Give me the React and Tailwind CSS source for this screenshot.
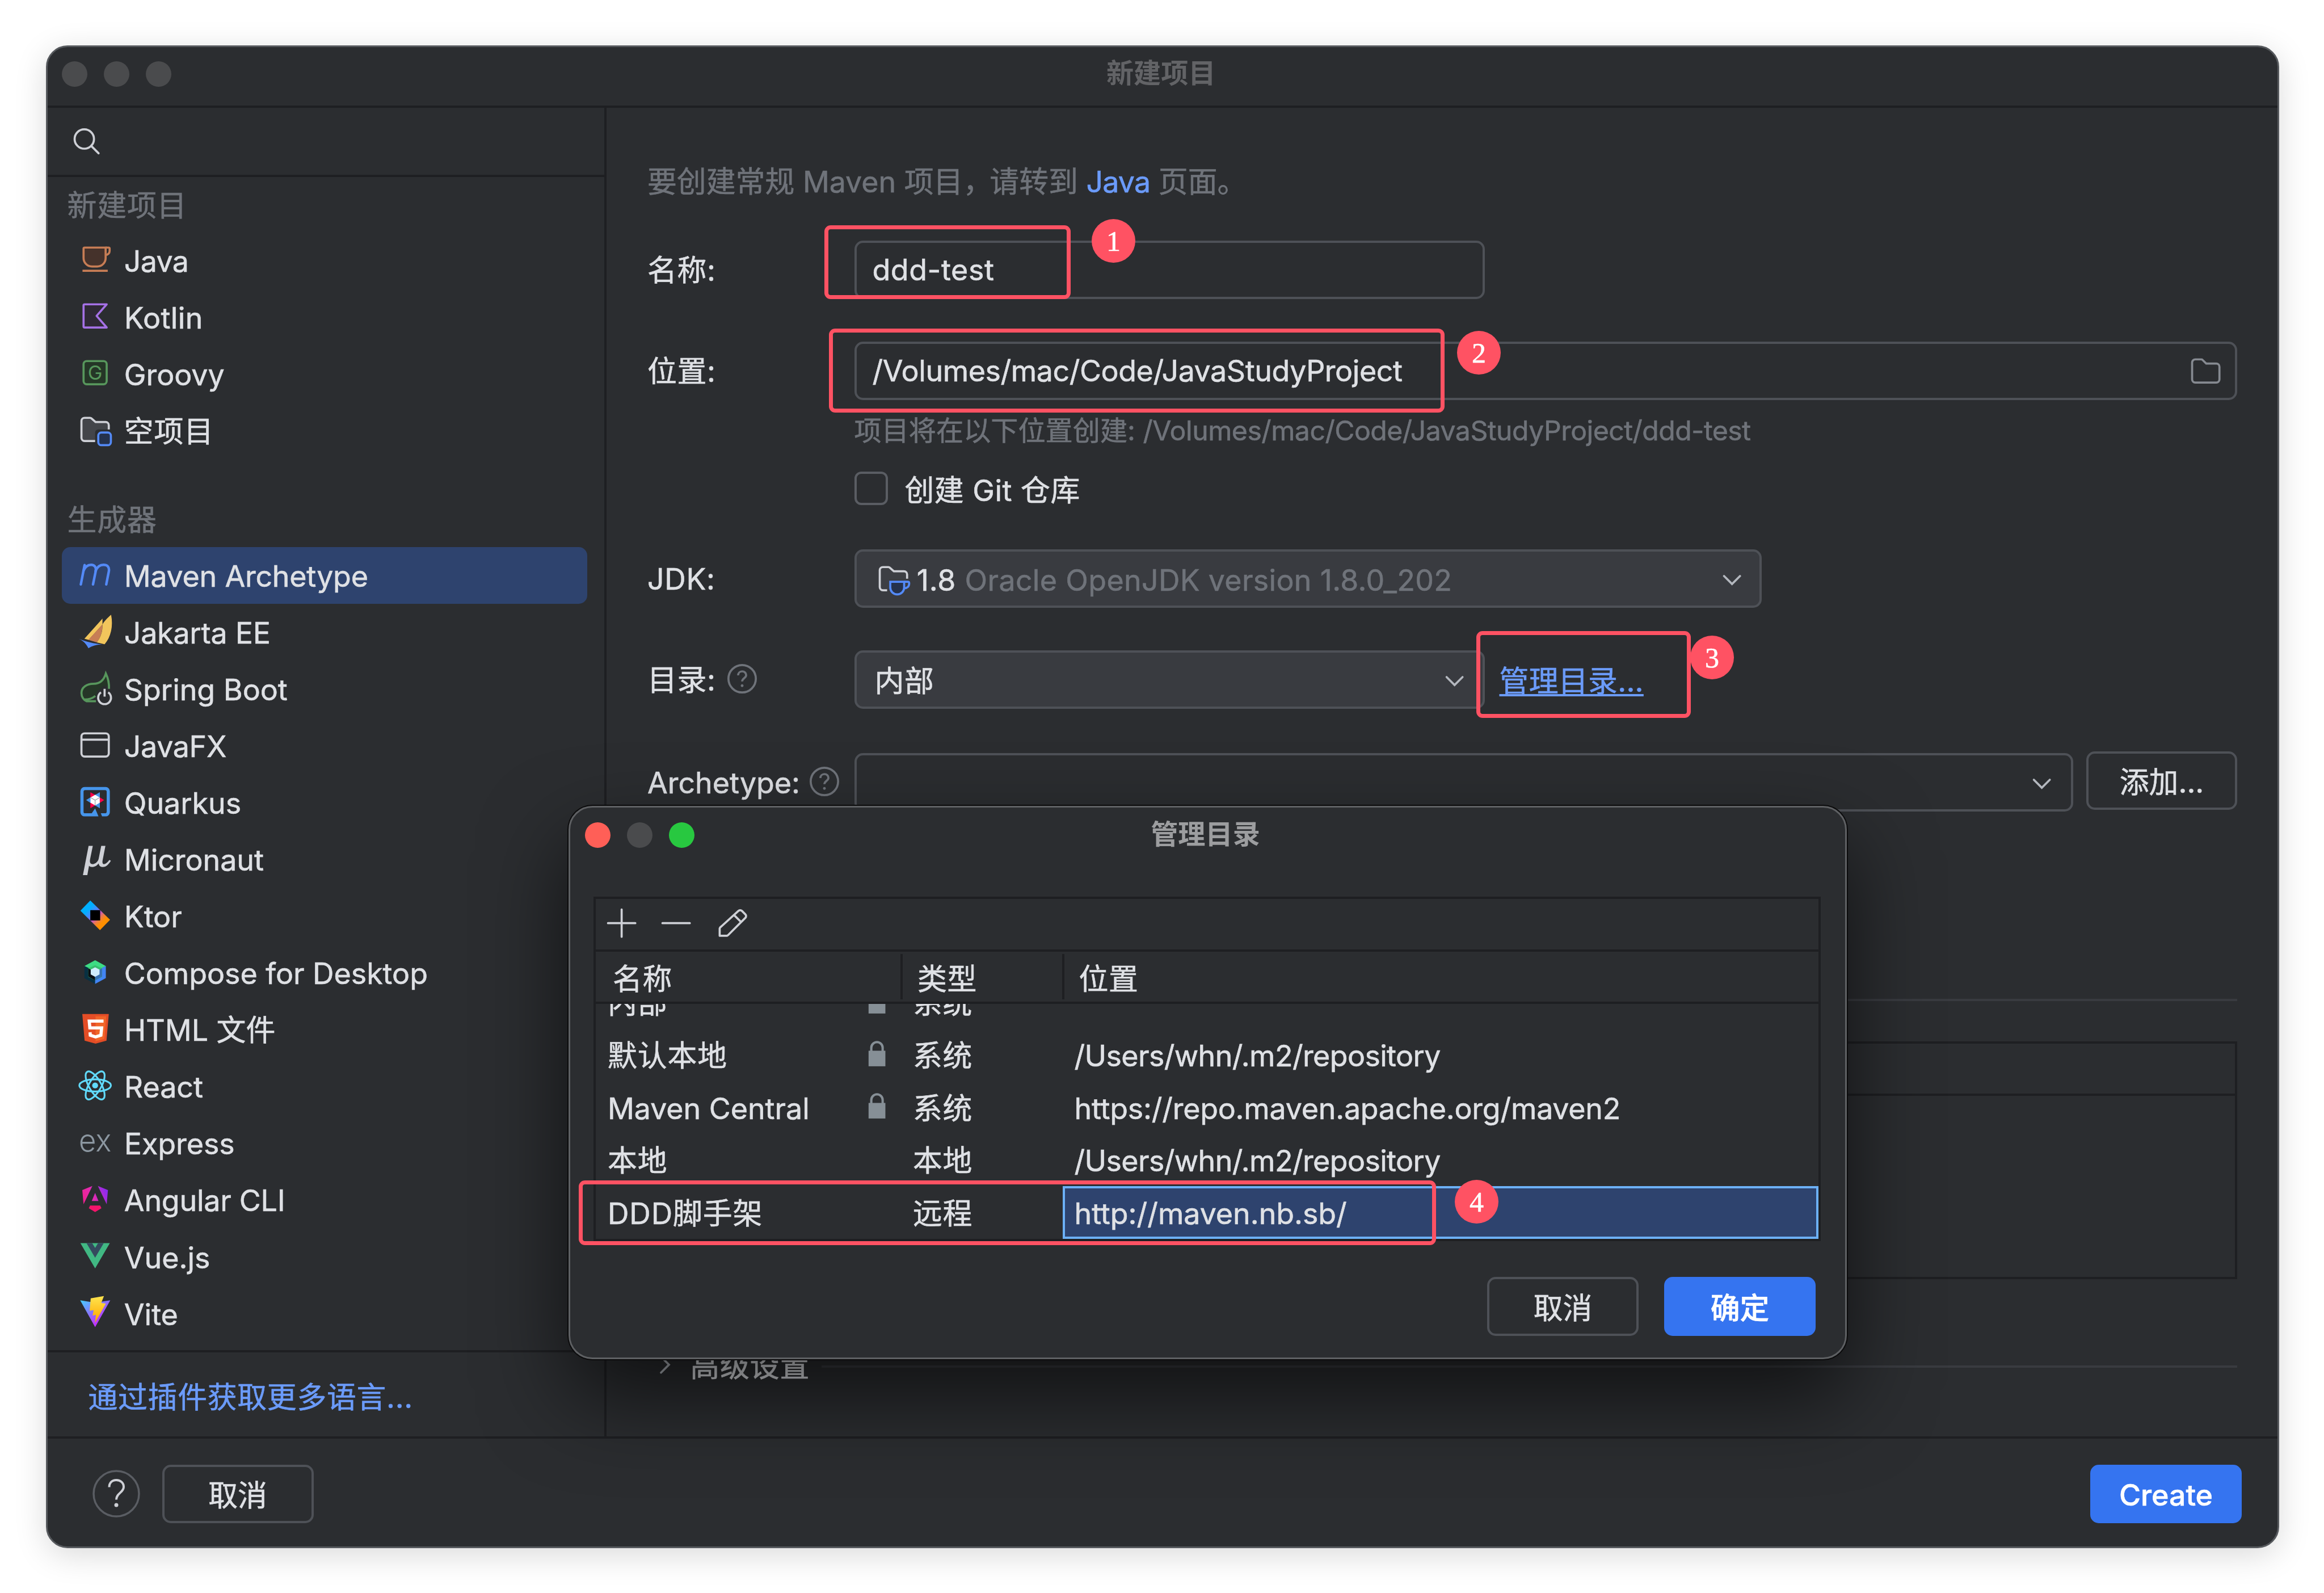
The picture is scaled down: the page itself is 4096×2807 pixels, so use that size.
import React from "react";

/* ---------- sidebar icons (16-unit grid) ---------- */

function Icon({ children, className = "" }) {
  return (
    <svg viewBox="0 0 16 16" fill="none" className={`h-[59.3px] w-[59.3px] shrink-0 overflow-visible ${className}`}>
      {children}
    </svg>
  );
}

const JavaIcon = () => (
  <Icon>
    <path d="M2.500 3a.5.5 0 0 1 .5-.5h10v5a4 4 0 0 1-4 4H6.500a4 4 0 0 1-4-4z" fill="#45322B" stroke="#C77D55" />
    <path d="M13 2.500h1.400a.5.5 0 0 1 .5.5v1.100A1.900 1.900 0 0 1 13 6M2 13.500h12" stroke="#C77D55" />
  </Icon>
);

const KotlinIcon = () => (
  <Icon>
    <path d="M13.500 2.500H3a.5.5 0 0 0-.5.5v10a.5.5 0 0 0 .5.5h10.500L8.700 8z" fill="#2F2936" stroke="#A571E6" strokeLinejoin="round" />
  </Icon>
);

const GroovyIcon = () => (
  <Icon>
    <rect x="2.500" y="2.500" width="11" height="11" rx="1.500" fill="#253627" stroke="#57965C" />
    <text x="8" y="11.400" textAnchor="middle" fontFamily="Inter" fontSize="9.300" fill="#57965C" strokeWidth="0" className="[-webkit-text-stroke:0]">G</text>
  </Icon>
);

const EmptyProjectIcon = () => (
  <Icon>
    <path d="M14.500 8V6A1.500 1.500 0 0 0 13 4.500H8.200L6.300 2.800a1 1 0 0 0-.7-.3H3A1.500 1.500 0 0 0 1.500 4v8A1.500 1.500 0 0 0 3 13.500h5V9.500A1.500 1.500 0 0 1 9.500 8z" fill="#43454A" />
    <path d="M14.500 8V6A1.500 1.500 0 0 0 13 4.500H8.200L6.300 2.800a1 1 0 0 0-.7-.3H3A1.500 1.500 0 0 0 1.500 4v8A1.500 1.500 0 0 0 3 13.500h5" stroke="#CED0D6" />
    <rect x="9.500" y="9.500" width="6" height="6" rx="1.500" fill="#25324D" stroke="#548AF7" />
  </Icon>
);

const MavenIcon = () => (
  <Icon>
    <g stroke="#548AF7" strokeWidth="1.200" strokeLinecap="round" strokeLinejoin="round">
      <path d="M1.200 12.900 3 3.700" />
      <path d="M2.500 6.300C3.300 4.500 4.700 3.600 6.100 3.600c1.700 0 2.500 1.200 2.200 2.900l-1.300 6.400" />
      <path d="M8.200 6.500c.8-1.900 2.200-2.900 3.800-2.900 2 0 2.900 1.300 2.500 3.200l-1.200 6.100" />
    </g>
  </Icon>
);

const JakartaIcon = () => (
  <Icon>
    <path d="M11.500 1.900 2.900 11.500l2 .5 6.600-7.300z" fill="#F2C55C" />
    <path d="M11.500 4.700 4.800 12l4 1.200C10.700 10.800 11.500 8 11.500 4.700z" fill="#C77D55" />
    <path d="M15.600.1C13.900 1.600 12.300 3.200 11.500 4.700c.1 3.300-.8 6-2.700 8.500l3.700.9C15.500 10.800 16.700 5.500 15.600.1z" fill="#F2C55C" />
    <path d="M.2 11.500c3.600 1.500 7.300 2.300 11.300 2.700-2.700 0-4.700.5-6.700 1.800C3.800 14 2.500 12.600.2 11.500z" fill="#548AF7" />
  </Icon>
);

const SpringIcon = () => (
  <Icon>
    <path d="M13.100 1.200c-1 3.400-3 4.700-5.900 4.700-3.200 0-5.700 1.700-5.700 4.400 0 1.600.7 2.600 1.700 3l5.200-1.700.7-2.400 3.200-2.300h2.200z" fill="#253627" />
    <path d="M14.600 8.300c.1-2.500-.3-4.800-1.500-7.300-1 3.500-3 4.900-5.900 4.900-3.200 0-5.700 1.700-5.700 4.400 0 2 1.200 3.400 2.400 3.900h4.500M3 13.400c2 0 3.700-.6 5.100-1.700" stroke="#57965C" />
    <path d="M10.800 10a3.050 3.050 0 1 0 3.400 0M12.500 8.300v3.700" stroke="#CED0D6" />
  </Icon>
);

const JavaFxIcon = () => (
  <Icon>
    <rect x="1.500" y="2.500" width="13" height="11" rx="1.500" stroke="#CED0D6" />
    <path d="M1.500 5.500h13" stroke="#CED0D6" />
  </Icon>
);

const QuarkusIcon = () => (
  <Icon>
    <path d="M6.400 13.500H3.200a.7.7 0 0 1-.7-.7V3.200c0-.4.3-.7.7-.7h9.600c.4 0 .7.300.7.7v9.600c0 .4-.3.7-.7.7h-2.100l.6 1.500H13a2 2 0 0 0 2-2V3a2 2 0 0 0-2-2H3a2 2 0 0 0-2 2v10a2 2 0 0 0 2 2h6.600L8 11.200z" fill="#4695EB" />
    <path d="m5.750 3.500 2.500 1.400-2.500 1.600zM12.300 7.250 10 5.800v2.900zM5.750 11.100l2.500-1.500-2.500-1.600z" fill="#FF004A" />
    <path d="M10.250 3.500 7.700 4.900l2.550 1.600zM3.700 7.250 6 5.800v2.900zM10.250 11.100 7.700 9.600 10.250 8z" fill="#4695EB" />
    <path d="m8 4.700 2.200 1.300v2.500L8 9.800 5.800 8.500V6z" fill="#fff" />
    <path d="M5.900 6.100 8 7.300l2.100-1.200M8 7.300v2.400" stroke="#9a9da3" strokeWidth=".3" />
  </Icon>
);

const MicronautIcon = () => (
  <Icon>
    <path d="M4.900 2h2L5.600 8.400c-.3 1.600.2 2.300 1.200 2.300 1.300 0 2.600-1.200 2.900-2.600L10.900 2h2l-1.300 6.700c-.3 1.400 0 2 .6 2 .8 0 1.700-.9 2.600-2l.7.4c-1.200 2-2.500 3-3.900 3-1.200 0-1.800-.7-1.900-1.700-.9 1.100-2 1.700-3.100 1.700-.7 0-1.200-.2-1.500-.6L4.300 15.900H2.200z" fill="#CED0D6" />
  </Icon>
);

const KtorIcon = () => (
  <Icon>
    <defs>
      <linearGradient id="ktor" x1="2" y1="2" x2="14" y2="14" gradientUnits="userSpaceOnUse">
        <stop offset=".25" stopColor="#00AFFF" />
        <stop offset=".42" stopColor="#5282FF" />
        <stop offset=".56" stopColor="#C757BC" />
        <stop offset=".66" stopColor="#EE7B4A" />
        <stop offset=".78" stopColor="#FF8F00" />
      </linearGradient>
    </defs>
    <path d="M1 5.900 5.700 1 15.100 10.200 10.300 15.100z" fill="url(#ktor)" />
    <path d="M5.700 5.600h4.700v4.900H5.700z" fill="#000" />
  </Icon>
);

const ComposeIcon = () => (
  <Icon>
    <path d="m8 2.400 5.100 2.800L8 8 2.900 5.200z" fill="#3DDC84" />
    <path d="M2.900 5.200 5.700 6.500v3.300L8 11v2.700l-5.100-2.800z" fill="#083042" />
    <path d="M13.100 5.200 10.300 6.500v3.300L8 11v2.700l5.100-2.800z" fill="#4285F4" />
    <path d="M8 4.800 4.700 6.300v4L8 12l3.300-1.700v-4z" fill="#37BF6E" />
    <path d="M4.700 6.300 8 8v4l-3.300-1.800z" fill="#0a0f14" />
    <path d="M11.300 6.300 8 8v4l3.300-1.800z" fill="#3870B2" />
    <path d="m8 5.800 2.100 1.100v2.300L8 10.300 5.900 9.200V6.900z" fill="#D0EDFC" />
  </Icon>
);

const HtmlIcon = () => (
  <Icon>
    <path d="M1.900 1h12.600l-1.100 12.700L8.200 15.100 3 13.700z" fill="#E44D26" />
    <path d="M8.200 2.100v11.900l4.200-1.200.9-10.700z" fill="#F16529" />
    <path d="M12 4.400H5.200l.3 3.200h5.600l-.35 3.500-2.550.8-2.500-.8-.1-1.400" stroke="#fff" strokeWidth="1.500" />
  </Icon>
);

const ReactIcon = () => (
  <Icon>
    <g stroke="#61DAFB" strokeWidth=".85">
      <ellipse cx="8" cy="8" rx="7.500" ry="2.900" />
      <ellipse cx="8" cy="8" rx="7.500" ry="2.900" transform="rotate(60 8 8)" />
      <ellipse cx="8" cy="8" rx="7.500" ry="2.900" transform="rotate(120 8 8)" />
    </g>
    <circle cx="8" cy="8" r="1.400" fill="#61DAFB" />
  </Icon>
);

const ExpressIcon = () => (
  <Icon>
    <text x=".2" y="12.500" fontFamily="Inter" fontWeight="300" fontSize="15" textLength="15.600" lengthAdjust="spacingAndGlyphs" fill="#8C97A1" className="[-webkit-text-stroke:0]">ex</text>
  </Icon>
);

const AngularIcon = () => (
  <Icon>
    <defs>
      <linearGradient id="ng" x1="2" y1="10" x2="14" y2="5" gradientUnits="userSpaceOnUse">
        <stop stopColor="#F0208C" />
        <stop offset=".45" stopColor="#E22BB0" />
        <stop offset="1" stopColor="#8A2BF0" />
      </linearGradient>
    </defs>
    <path d="m1.900 3.800 4.800-2-4.200 8.700zM14.100 3.800l-4.800-2 4.200 8.700zM8 5.100 6.400 9h3.200z" fill="url(#ng)" />
    <path d="M5.600 11.100h4.800l.6 1.300L8 14.200l-3-1.800z" fill="#F5156C" />
  </Icon>
);

const VueIcon = () => (
  <Icon>
    <path d="M1 2h14L8 14z" fill="#41B883" />
    <path d="M3.900 2h2.700L8 4.300 9.400 2h2.700L8 9z" fill="#35495E" />
  </Icon>
);

const ViteIcon = () => (
  <Icon>
    <defs>
      <linearGradient id="viteA" x1="1" y1="2" x2="9" y2="13" gradientUnits="userSpaceOnUse">
        <stop stopColor="#41D1FF" />
        <stop offset="1" stopColor="#BD34FE" />
      </linearGradient>
      <linearGradient id="viteB" x1="9" y1="1" x2="9" y2="12" gradientUnits="userSpaceOnUse">
        <stop stopColor="#FFE14A" />
        <stop offset="1" stopColor="#FFA800" />
      </linearGradient>
    </defs>
    <path d="M.9 2.200 8 3.400l7.200-1.200L8 15z" fill="url(#viteA)" />
    <path d="M5.900 1.300 12.200.2 10.900 3.500l2.200.3L7.900 13l.5-3.900-1.600.4.500-2.600-1.900.3z" fill="url(#viteB)" />
  </Icon>
);

const Chevron = () => (
  <svg viewBox="0 0 16 16" fill="none" className="mt-[4px] h-[59.3px] w-[59.3px] shrink-0">
    <path d="M4.200 6.200 8 10l3.800-3.800" stroke="#B4B8BF" strokeLinecap="round" />
  </svg>
);

const HelpMark = () => (
  <svg viewBox="0 0 14 14" fill="none" className="mb-[3px] h-[52px] w-[52px] shrink-0">
    <circle cx="7" cy="7" r="6.500" stroke="#6F737A" />
    <path d="M5.100 5.400c0-1.100.8-1.900 1.900-1.900s1.900.8 1.900 1.800c0 1.400-1.900 1.500-1.900 3" stroke="#6F737A" />
    <circle cx="7" cy="10.300" r=".65" fill="#6F737A" />
  </svg>
);

const Lock = () => (
  <Icon className="mb-[9px]">
    <path d="M5.300 8V5.200a2.700 2.700 0 0 1 5.400 0V8" stroke="#868F96" strokeWidth="1.100" />
    <path d="M4 6.600h8V14H4z" fill="#868F96" />
  </Icon>
);

/* ---------- data ---------- */

const newProject = [
  { label: "Java", icon: JavaIcon, tracking: "tracking-[-0.6px]" },
  { label: "Kotlin", icon: KotlinIcon, tracking: "tracking-[0.4px]" },
  { label: "Groovy", icon: GroovyIcon },
  { label: "空项目", icon: EmptyProjectIcon, tracking: "tracking-[0.9px]" },
];

const generators = [
  { label: "Maven Archetype", icon: MavenIcon, selected: true, tracking: "tracking-[-0.2px]" },
  { label: "Jakarta EE", icon: JakartaIcon, tracking: "tracking-[-0.2px]" },
  { label: "Spring Boot", icon: SpringIcon },
  { label: "JavaFX", icon: JavaFxIcon, tracking: "tracking-[-0.3px]" },
  { label: "Quarkus", icon: QuarkusIcon },
  { label: "Micronaut", icon: MicronautIcon },
  { label: "Ktor", icon: KtorIcon },
  { label: "Compose for Desktop", icon: ComposeIcon },
  { label: "HTML 文件", icon: HtmlIcon },
  { label: "React", icon: ReactIcon },
  { label: "Express", icon: ExpressIcon },
  { label: "Angular CLI", icon: AngularIcon, tracking: "tracking-[-0.2px]" },
  { label: "Vue.js", icon: VueIcon },
  { label: "Vite", icon: ViteIcon },
];

const catalogs = [
  { name: "内部", locked: true, type: "系统", location: "" },
  { name: "默认本地", locked: true, type: "系统", location: "/Users/whn/.m2/repository", tracking: "tracking-[-0.6px]" },
  { name: "Maven Central", locked: true, type: "系统", location: "https://repo.maven.apache.org/maven2", tracking: "tracking-[-0.2px]" },
  { name: "本地", type: "本地", location: "/Users/whn/.m2/repository", tracking: "tracking-[-0.6px]" },
  { name: "DDD脚手架", type: "远程", location: "http://maven.nb.sb/", selected: true },
];

/* ---------- parts ---------- */

function SidebarItem({ label, icon: Glyph, selected, tracking = "" }) {
  return (
    <div className={`ml-[25px] mr-[30px] flex h-[100.04px] items-center rounded-[15px] pl-[29px] ${selected ? "bg-[#2E436E]" : ""}`}>
      <div className="mb-[4px] mr-[22px]">
        <Glyph />
      </div>
      <span className={`mt-[4px] whitespace-pre ${tracking}`}>{label}</span>
    </div>
  );
}

function Sidebar() {
  return (
    <aside className="flex w-[985px] shrink-0 flex-col border-r-4 border-[#1E1F22]">
      <div className="flex h-[122px] shrink-0 items-center border-b-4 border-[#1E1F22] pl-[39px]">
        <svg viewBox="0 0 16 16" fill="none" className="h-[59.3px] w-[59.3px]">
          <circle cx="6.900" cy="7" r="4.600" stroke="#CED0D6" />
          <path d="m10.200 10.300 3.500 3.500" stroke="#CED0D6" strokeLinecap="round" />
        </svg>
      </div>
      <div className="flex h-[96.5px] shrink-0 items-center pl-[35px] pt-[5px] tracking-[0.9px] text-[#6F737A]">新建项目</div>
      {newProject.map((item) => <SidebarItem key={item.label} {...item} />)}
      <div className="mt-[57.5px] flex h-[98px] shrink-0 items-center pl-[35px] pt-[4px] tracking-[0.9px] text-[#6F737A]">生成器</div>
      {generators.map((item) => <SidebarItem key={item.label} {...item} />)}
      <div className="mt-[14px] flex flex-1 items-center border-t-4 border-[#1E1F22] pl-[72px] pt-[12px] tracking-[0.7px] text-[#6B9BFA]">
        通过插件获取更多语言...
      </div>
    </aside>
  );
}

function Label({ children, help, tight }) {
  return (
    <div className={`flex w-[364.500px] shrink-0 items-center ${tight ? "gap-[17px]" : "gap-[20px]"}`}>
      <span className={`pt-[4px] ${tight ? "" : "tracking-[0.7px]"}`}>{children}</span>
      {help && <HelpMark />}
    </div>
  );
}

function Form() {
  return (
    <main className="flex min-w-0 flex-1 flex-col pl-[72.5px] pr-[71px] pt-[101px]">
      <div className="h-[60px] leading-[60px] text-[#6F737A]">
        要创建常规 Maven 项目<span className="tracking-[-5px]">，</span>请转到 <span className="tracking-[-0.8px] text-[#6B9BFA]">Java</span> 页面。
      </div>

      <div className="mt-[73px] flex h-[102.500px] items-center">
        <Label>名称:</Label>
        <div className="flex h-full w-[1111px] items-center rounded-[15px] border-4 border-[#4E5157] pl-[28px] pt-[1px] tracking-[0.6px]">ddd-test</div>
      </div>

      <div className="mt-[75.5px] flex h-[102.500px] items-center">
        <Label>位置:</Label>
        <div className="flex h-full flex-1 items-center justify-between rounded-[15px] border-4 border-[#4E5157] pl-[28px] pr-[22px]">
          <span className="pt-[1px] tracking-[-0.4px]">/Volumes/mac/Code/JavaStudyProject</span>
          <svg viewBox="0 0 16 16" fill="none" className="h-[59.3px] w-[59.3px]">
            <path d="M1.500 4A1.500 1.500 0 0 1 3 2.500h2.900a.8.8 0 0 1 .5.200L8.200 4.500H13A1.500 1.500 0 0 1 14.500 6v6a1.500 1.500 0 0 1-1.500 1.500H3A1.500 1.500 0 0 1 1.500 12z" stroke="#868A91" />
          </svg>
        </div>
      </div>

      <div className="ml-[364.5px] mt-[24.5px] h-[60px] text-[48.17px] leading-[60px] text-[#6F737A]">
        项目将在以下位置创建: <span className="tracking-[-0.5px]">/Volumes/mac/Code/JavaStudyProject/ddd-test</span>
      </div>

      <div className="ml-[364.5px] mt-[41.5px] flex h-[60px] items-center">
        <div className="h-[59px] w-[59px] rounded-[12px] border-4 border-[#5A5D63]" />
        <span className="ml-[30px] mt-[8px] tracking-[0.5px]">创建 Git 仓库</span>
      </div>

      <div className="mt-[77px] flex h-[103.5px] items-center">
        <Label>JDK:</Label>
        <div className="flex h-full w-[1599.5px] items-center rounded-[15px] border-4 border-[#4E5157] bg-[#393B40] pl-[35px] pr-[19px]">
          <Icon>
            <path d="M14.500 8V6A1.500 1.500 0 0 0 13 4.500H8.200L6.300 2.800a1 1 0 0 0-.7-.3H3A1.500 1.500 0 0 0 1.500 4v8A1.500 1.500 0 0 0 3 13.500h2" stroke="#CED0D6" fill="#43454A" fillOpacity=".4" />
            <path d="M6 8.500h8.500V14H6z" fill="#393B40" />
            <path d="M6.500 9.500h6.600v2.700a3.300 3.300 0 0 1-6.600 0z" fill="#25324D" stroke="#548AF7" />
            <path d="M13.100 9.500h1.700c.5 0 .7.300.7.700 0 1.600-1 2.400-2.400 2.400" stroke="#548AF7" />
          </Icon>
          <span className="ml-[12px] mt-[7px] flex-1 whitespace-pre tracking-[0.8px]">1.8 <span className="tracking-[0.35px] text-[#6F737A]">Oracle OpenJDK version 1.8.0_202</span></span>
          <Chevron />
        </div>
      </div>

      <div className="mt-[74.5px] flex h-[103.5px] items-center">
        <Label help>目录:</Label>
        <div className="flex h-full w-[1111px] items-center justify-between rounded-[15px] border-4 border-[#4E5157] bg-[#393B40] pl-[32px] pr-[19px]">
          <span className="pt-[8px] tracking-[0.7px]">内部</span>
          <Chevron />
        </div>
        <span className="ml-[26px] pt-[8px] tracking-[0.3px] text-[#6B9BFA] underline decoration-4 underline-offset-[4px] [text-decoration-skip-ink:none]">管理目录...</span>
      </div>

      <div className="mt-[77.5px] flex h-[103.5px] items-center">
        <Label help tight>Archetype:</Label>
        <div className="flex h-full flex-1 items-center justify-end rounded-[15px] border-4 border-[#4E5157] pr-[22px]">
          <Chevron />
        </div>
        <button className="mb-[6px] ml-[23px] h-full w-[266px] rounded-[15px] border-4 border-[#4E5157] pt-[8px]">添加...</button>
      </div>

      <div className="mt-[302px] flex h-[60px] shrink-0 items-center">
        <div className="h-[4px] flex-1 bg-[#393B40]" />
      </div>
      <div className="mt-[43px] flex h-[419px] shrink-0 flex-col border-4 border-[#1E1F22]">
        <div className="h-[92px] border-b-4 border-[#1E1F22]" />
      </div>

      <div className="mt-[121px] flex h-[60px] shrink-0 items-center pl-[1px]">
        <svg viewBox="0 0 16 16" fill="none" className="h-[59.3px] w-[59.3px]">
          <path d="M6.200 4.200 10 8l-3.800 3.800" stroke="#B4B8BF" strokeLinecap="round" />
        </svg>
        <span className="ml-[15px] pt-[6px] tracking-[0.9px]">高级设置</span>
        <div className="ml-[21px] mt-[5px] h-[4px] flex-1 bg-[#393B40]" />
      </div>
    </main>
  );
}

function CatalogDialog() {
  return (
    <section className="absolute left-[1002px] top-[1420px] flex h-[975px] w-[2253px] flex-col rounded-[42px] border-[3px] border-[#5E6063] bg-[#2B2D30] shadow-[0_0_0_2px_#0b0b0c,0_66px_150px_rgba(0,0,0,0.62)]">
      <header className="grid h-[97px] shrink-0 grid-cols-[1fr_auto_1fr] items-center pl-[26px] pr-[34px]">
        <div className="flex gap-[29px]">
          <i className="h-[45px] w-[45px] rounded-full bg-[#FF5F57]" />
          <i className="h-[45px] w-[45px] rounded-full bg-[#4A4B4D]" />
          <i className="h-[45px] w-[45px] rounded-full bg-[#28C840]" />
        </div>
        <h2 className="pb-[3px] text-[48.17px] font-bold text-[#9C9D9F] [-webkit-text-stroke:0]">管理目录</h2>
      </header>

      <div className="ml-[41px] mt-[60px] flex h-[607px] w-[2163px] shrink-0 flex-col border-4 border-[#1E1F22]">
        <div className="flex h-[93px] shrink-0 items-center gap-[37px] border-b-4 border-[#1E1F22] pb-[3px] pl-[16px]">
          <Icon><path d="M1.500 8h13M8 1.500v13" stroke="#CED0D6" strokeLinecap="round" /></Icon>
          <Icon><path d="M1.500 8h13" stroke="#CED0D6" strokeLinecap="round" /></Icon>
          <Icon className="ml-[2px]">
            <path d="M10.900 2.200a1.200 1.200 0 0 1 1.700 0l1.600 1.600a1.200 1.200 0 0 1 0 1.700L6 13.700l-.5.300H2v-3.400l.2-.5zM8.900 4.200l3.300 3.300" stroke="#CED0D6" strokeLinejoin="round" />
          </Icon>
        </div>

        <div className="grid h-[92px] shrink-0 grid-cols-[541px_284.5px_1fr] items-center border-b-4 border-[#1E1F22] tracking-[0.7px]">
          <div className="flex h-[80px] items-center border-r-4 border-[#1E1F22] pl-[30px] pt-[9px]">名称</div>
          <div className="flex h-[80px] items-center border-r-4 border-[#1E1F22] pl-[26px] pt-[9px]">类型</div>
          <div className="flex h-[80px] items-center pl-[26px] pt-[9px]">位置</div>
        </div>

        <div className="flex min-h-0 flex-1 flex-col justify-end overflow-hidden">
          {catalogs.map((row) => (
            <div key={row.name} className="grid h-[92.6px] shrink-0 grid-cols-[538px_284.5px_1fr]">
              <div className="flex items-center justify-between pl-[21px] pr-[13px] pt-[4px]">
                <span className={row.name === "Maven Central" ? "" : "tracking-[0.9px]"}>{row.name}</span>
                {row.locked && <Lock />}
              </div>
              <div className="flex items-center pl-[21px] pt-[4px] tracking-[0.7px]">{row.type}</div>
              <div className={`flex items-center border-4 pl-[17px] ${row.selected ? "border-[#6CB0F7] bg-[#2E436E]" : "border-transparent"}`}>
                <span className={`pt-[4px] ${row.tracking ?? ""}`}>{row.location}</span>
              </div>
            </div>
          ))}
        </div>
      </div>

      <footer className="mt-[63px] flex justify-end gap-[45px] pr-[52px]">
        <button className="h-[104px] w-[267px] rounded-[15px] border-4 border-[#4E5157] pt-[7px]">取消</button>
        <button className="h-[104px] w-[267px] rounded-[15px] bg-[#3574F0] pt-[7px] font-medium text-white">确定</button>
      </footer>
    </section>
  );
}

function Badge({ className, children }) {
  return (
    <div className={`absolute flex h-[77px] w-[77px] items-center justify-center rounded-full bg-[#FF5263] font-['Liberation_Serif',serif] text-[50px] leading-none text-white ${className}`}>
      {children}
    </div>
  );
}

function Annotations() {
  return (
    <>
      <div className="absolute left-[1453px] top-[397px] h-[130px] w-[434px] rounded-[11px] border-[7px] border-[#FF5263]" />
      <Badge className="left-[1924px] top-[386px]">1</Badge>
      <div className="absolute left-[1461px] top-[579px] h-[148px] w-[1085px] rounded-[11px] border-[7px] border-[#FF5263]" />
      <Badge className="left-[2568px] top-[583px]">2</Badge>
      <div className="absolute left-[2602px] top-[1112px] h-[153px] w-[378px] rounded-[11px] border-[7px] border-[#FF5263]" />
      <Badge className="left-[2979px] top-[1120px]">3</Badge>
      <div className="absolute left-[1020px] top-[2080px] h-[114px] w-[1511px] rounded-[11px] border-[7px] border-[#FF5263]" />
      <Badge className="left-[2564px] top-[2079px]">4</Badge>
    </>
  );
}

export default function App() {
  return (
    <div className="relative h-[2807px] w-[4096px] overflow-hidden bg-white pl-[80.5px] pt-[80px] font-['Inter','Noto_Sans_CJK_SC',sans-serif] text-[51.87px] leading-[60px] text-[#DFE1E5] [-webkit-text-stroke:0.6px]">
      <div className="flex h-[2648px] w-[3936.5px] flex-col overflow-hidden rounded-[38px] border-[3px] border-[#56595D] bg-[#2B2D30] shadow-[0_12px_56px_rgba(0,0,0,0.15)]">
        <header className="grid h-[107px] shrink-0 grid-cols-[1fr_auto_1fr] items-center border-b-4 border-[#1E1F22] pb-[8px] pl-[25px] pr-[30px]">
          <div className="flex gap-[29px]">
            <i className="h-[45px] w-[45px] rounded-full bg-[#4A4B4D]" />
            <i className="h-[45px] w-[45px] rounded-full bg-[#4A4B4D]" />
            <i className="h-[45px] w-[45px] rounded-full bg-[#4A4B4D]" />
          </div>
          <h1 className="pb-[4px] text-[48.17px] font-bold text-[#626366] [-webkit-text-stroke:0]">新建项目</h1>
        </header>

        <div className="flex h-[2341px] shrink-0">
          <Sidebar />
          <Form />
        </div>

        <footer className="flex flex-1 items-center border-t-4 border-[#1E1F22] pl-[79px] pr-[63px] pt-[4px]">
          <svg viewBox="0 0 84 84" fill="none" className="h-[84px] w-[84px]">
            <circle cx="42" cy="42" r="40" stroke="#5A5D63" strokeWidth="3.500" />
            <path d="M29.500 30.500c0-7.500 5-12.500 12.500-12.500s13 5 13 12c0 10-13 11-13 22.500" stroke="#CED0D6" strokeWidth="4" />
            <circle cx="42" cy="62" r="3.500" fill="#CED0D6" />
          </svg>
          <button className="ml-[39px] h-[103px] w-[267px] rounded-[15px] border-4 border-[#4E5157] pt-[8px]">取消</button>
          <button className="ml-auto h-[103px] w-[267px] rounded-[15px] bg-[#3574F0] pt-[6px] font-medium text-white">Create</button>
        </footer>
      </div>

      <CatalogDialog />
      <Annotations />
    </div>
  );
}
